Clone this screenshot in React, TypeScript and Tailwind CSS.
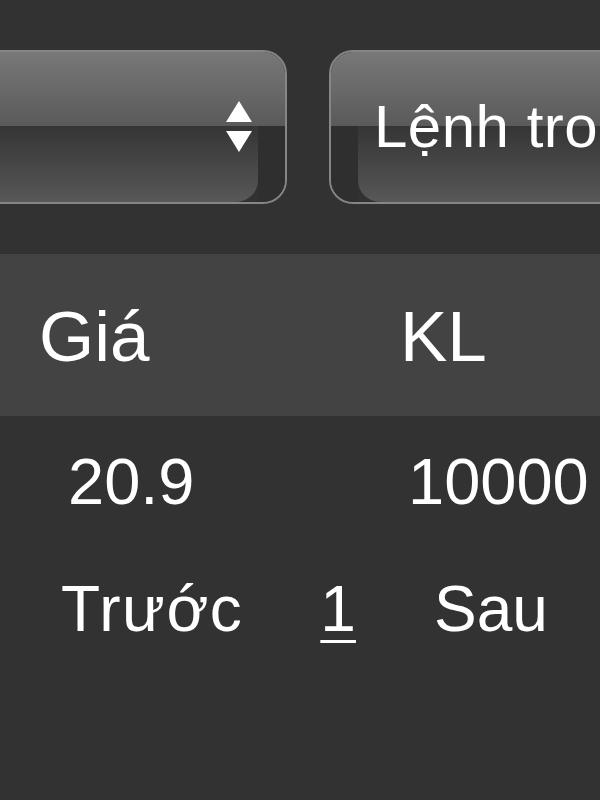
export default function App() {
  return (
    <div className="h-[800px] w-[600px] overflow-hidden bg-[#323232] font-['Liberation_Sans',Arial,sans-serif] text-white">
      {/* Top selectors */}
      <div className="flex gap-[42px] pt-[50px] pb-[50px]">
        <GlossButton side="left">
          <div className="ml-auto mr-[33px] flex items-center">
            <svg width="26" height="52" viewBox="0 0 26 52">
              <polygon points="13,0 26,21 0,21" fill="#ffffff" />
              <polygon points="0,30 26,30 13,51" fill="#ffffff" />
            </svg>
          </div>
        </GlossButton>
        <GlossButton side="right">
          <span className="pl-[43px] text-[60px] leading-none tracking-[0.5px] whitespace-nowrap">Lệnh tro</span>
        </GlossButton>
      </div>

      {/* Table header */}
      <div className="grid h-[162px] grid-cols-[400px_1fr] bg-[#434343] pt-[4px] text-[71px] leading-[158px]">
        <div className="pl-[39px]">Giá</div>
        <div>KL</div>
      </div>

      {/* Row */}
      <div className="grid h-[128px] grid-cols-[408px_1fr] pt-[3px] text-[65px] leading-[125px]">
        <div className="pl-[68px]">20.9</div>
        <div>10000</div>
      </div>

      {/* Pagination */}
      <div className="flex pt-[3px] pl-[61px] text-[64px] leading-[125px]">
        <span className="tracking-[1.5px]">Trước</span>
        <span className="ml-[77px] underline decoration-[3px] underline-offset-[9px]">1</span>
        <span className="ml-[78px]">Sau</span>
      </div>
    </div>
  )
}

function GlossButton({ side, children }: { side: 'left' | 'right'; children: React.ReactNode }) {
  const isLeft = side === 'left'
  return (
    <div
      className={`relative h-[154px] w-[320px] shrink-0 overflow-hidden rounded-[24px] border-2 border-[#868686] ${
        isLeft ? '-ml-[33px]' : ''
      }`}
    >
      <div className="flex h-full flex-col">
        <div className="h-[74px] bg-linear-to-b from-[#787878] to-[#5a5a5a]" />
        <div className={`flex flex-1 ${isLeft ? '' : 'flex-row-reverse'}`}>
          <div
            className={`flex-1 bg-linear-to-b from-[#353535] to-[#585858] ${
              isLeft ? 'rounded-br-[22px]' : 'rounded-bl-[22px]'
            }`}
          />
          <div className="w-[27px] bg-[#2f2f2f]" />
        </div>
      </div>
      <div className="absolute inset-0 flex items-center">{children}</div>
    </div>
  )
}
